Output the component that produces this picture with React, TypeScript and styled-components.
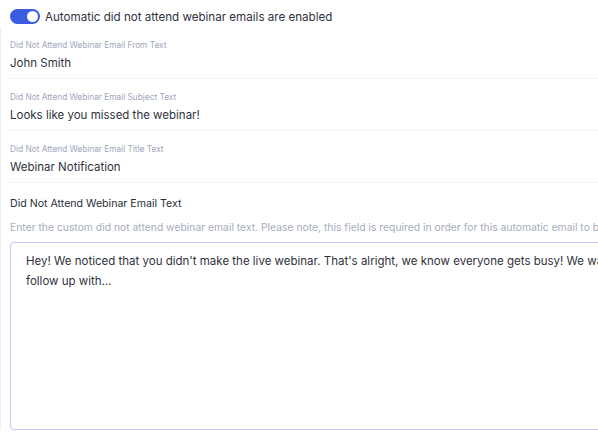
import React from "react";
import styled, { createGlobalStyle } from "styled-components";

const Global = createGlobalStyle`
  html, body { margin: 0; padding: 0; background: #ffffff; overflow: hidden; }
  body { font-family: Inter, "Noto Sans", sans-serif; color: #2f3240; }
`;

const Page = styled.div`
  width: 660px;
  padding: 8px 0 0 0;
  display: flex;
  flex-direction: column;
`;

const ToggleRow = styled.label`
  display: flex;
  align-items: center;
  gap: 5px;
  padding-left: 10px;
  height: 17px;
  font-size: 11.6px;
  color: #2f3240;
`;

const Switch = styled.span<{ $on: boolean }>`
  position: relative;
  width: 30px;
  height: 15px;
  border-radius: 8px;
  background: ${(p) => (p.$on ? "#3a5ce0" : "#cfd3dc")};
  flex-shrink: 0;
  &::after {
    content: "";
    position: absolute;
    top: 2px;
    left: ${(p) => (p.$on ? "17px" : "2px")};
    width: 11px;
    height: 11px;
    border-radius: 50%;
    background: #ffffff;
  }
`;

const Body = styled.div`
  margin-top: 2px;
  border-left: 1px solid #eeeff2;
  display: flex;
  flex-direction: column;
`;

const Field = styled.div`
  margin-left: 9px;
  padding: 13px 0 6px 0;
  border-bottom: 1px solid #f1f2f4;
  display: flex;
  flex-direction: column;
  gap: 5px;
`;

const SmallLabel = styled.div`
  font-size: 8.3px;
  line-height: 10px;
  color: #9ea6bb;
`;

const Value = styled.div`
  font-size: 11.5px;
  line-height: 17px;
  color: #2f3240;
`;

const Section = styled.div`
  margin-left: 9px;
  padding-top: 13px;
  display: flex;
  flex-direction: column;
`;

const Heading = styled.div`
  font-size: 10.6px;
  line-height: 16px;
  color: #2a2d3a;
`;

const Helper = styled.div`
  margin-top: 8px;
  font-size: 10.35px;
  line-height: 14px;
  color: #a6adbd;
  white-space: nowrap;
`;

const TextArea = styled.div`
  margin-top: 8px;
  height: 188px;
  box-sizing: border-box;
  border: 1px solid #c3cbf1;
  border-radius: 4px;
  padding: 8px 15px;
  font-size: 11.5px;
  line-height: 20px;
  color: #2f3240;
  white-space: nowrap;
`;

const fields = [
  { label: "Did Not Attend Webinar Email From Text", value: "John Smith" },
  { label: "Did Not Attend Webinar Email Subject Text", value: "Looks like you missed the webinar!" },
  { label: "Did Not Attend Webinar Email Title Text", value: "Webinar Notification" },
];

export default function App() {
  return (
    <>
      <Global />
      <Page>
        <ToggleRow>
          <Switch $on={true} />
          Automatic did not attend webinar emails are enabled
        </ToggleRow>
        <Body>
          {fields.map((f) => (
            <Field key={f.label}>
              <SmallLabel>{f.label}</SmallLabel>
              <Value>{f.value}</Value>
            </Field>
          ))}
          <Section>
            <Heading>Did Not Attend Webinar Email Text</Heading>
            <Helper>
              Enter the custom did not attend webinar email text. Please note, this field is required in order for this automatic email to be sent.
            </Helper>
            <TextArea>
              Hey! We noticed that you didn't make the live webinar. That's alright, we know everyone gets busy! We want to
              <br />
              follow up with...
            </TextArea>
          </Section>
        </Body>
      </Page>
    </>
  );
}
